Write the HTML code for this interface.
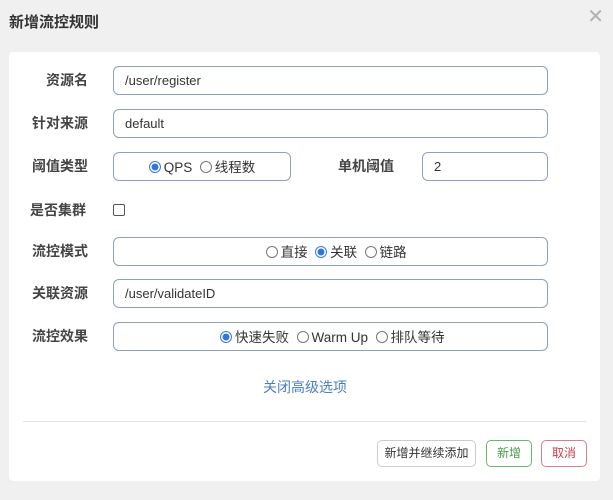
<!DOCTYPE html>
<html><head><meta charset="utf-8"><style>
body{margin:0;width:613px;height:500px;background:#f0f0f0;font-family:"Liberation Sans","Noto Sans CJK SC",sans-serif;position:relative;overflow:hidden;color:#333}
.a{position:absolute}
.title{left:9px;top:11px;font-size:15px;font-weight:bold;color:#333}
.x{right:9px;top:4px;font-size:20px;color:#b0b0b0;font-weight:300}
.card{left:9px;top:52px;width:591px;height:429px;background:#fff;border-radius:4px}
.lab{font-size:14px;font-weight:bold;color:#444;text-align:right;width:80px;line-height:28px}
.inp{border:1px solid #8ea2bd;border-radius:6px;box-sizing:border-box;height:29px;font-size:13px;line-height:27px;padding-left:11px;color:#333}
.rad{font-size:13.5px;text-align:center;line-height:29px}
.r{display:inline-block;width:12px;height:12px;border:1px solid #777;border-radius:50%;vertical-align:-1px;margin-right:3px;box-sizing:border-box}
.r.on{border:1px solid #3a7ad8;background:radial-gradient(#2f74e0 45%,#fff 52%)}
.btn{border:1px solid #ccc;border-radius:5px;font-size:12px;line-height:25px;height:27px;box-sizing:border-box;text-align:center;background:#fff}
</style></head><body>
<div class="a title">新增流控规则</div>
<div class="a x">✕</div>
<div class="a card"></div>
<div class="a lab" style="left:8px;top:66px">资源名</div>
<div class="a inp" style="left:113px;top:66px;width:435px">/user/register</div>
<div class="a lab" style="left:8px;top:109px">针对来源</div>
<div class="a inp" style="left:113px;top:109px;width:435px">default</div>
<div class="a lab" style="left:8px;top:152px">阈值类型</div>
<div class="a inp rad" style="left:113px;top:152px;width:178px;padding:0"><span class="r on"></span>QPS &nbsp;<span class="r"></span>线程数</div>
<div class="a lab" style="left:314px;top:152px">单机阈值</div>
<div class="a inp" style="left:422px;top:152px;width:126px">2</div>
<div class="a lab" style="top:196px;text-align:left;left:30px">是否集群</div>
<div class="a" style="left:113px;top:204px;width:12px;height:12px;border:1px solid #555;border-radius:2px;box-sizing:border-box"></div>
<div class="a lab" style="left:8px;top:237px">流控模式</div>
<div class="a inp rad" style="left:113px;top:237px;width:435px;padding:0">&nbsp;&nbsp;&nbsp;<span class="r"></span>直接 &nbsp;<span class="r on"></span>关联 &nbsp;<span class="r"></span>链路</div>
<div class="a lab" style="left:8px;top:279px">关联资源</div>
<div class="a inp" style="left:113px;top:279px;width:435px">/user/validateID</div>
<div class="a lab" style="left:8px;top:322px">流控效果</div>
<div class="a inp rad" style="left:113px;top:322px;width:435px;padding:0;padding-left:106px;text-align:left"><span class="r on"></span>快速失败 &nbsp;<span class="r"></span>Warm Up &nbsp;<span class="r"></span>排队等待</div>
<div class="a" style="left:263px;top:377px;font-size:14px;color:#4a7ec4">关闭高级选项</div>
<div class="a" style="left:23px;top:421px;width:563px;height:1px;background:#e5e5e5"></div>
<div class="a btn" style="left:377px;top:440px;width:99px">新增并继续添加</div>
<div class="a btn" style="left:486px;top:440px;width:46px;border-color:#6bb56b;color:#4a9a4a">新增</div>
<div class="a btn" style="left:541px;top:440px;width:46px;border-color:#d9808a;color:#c9404e">取消</div>
</body></html>
